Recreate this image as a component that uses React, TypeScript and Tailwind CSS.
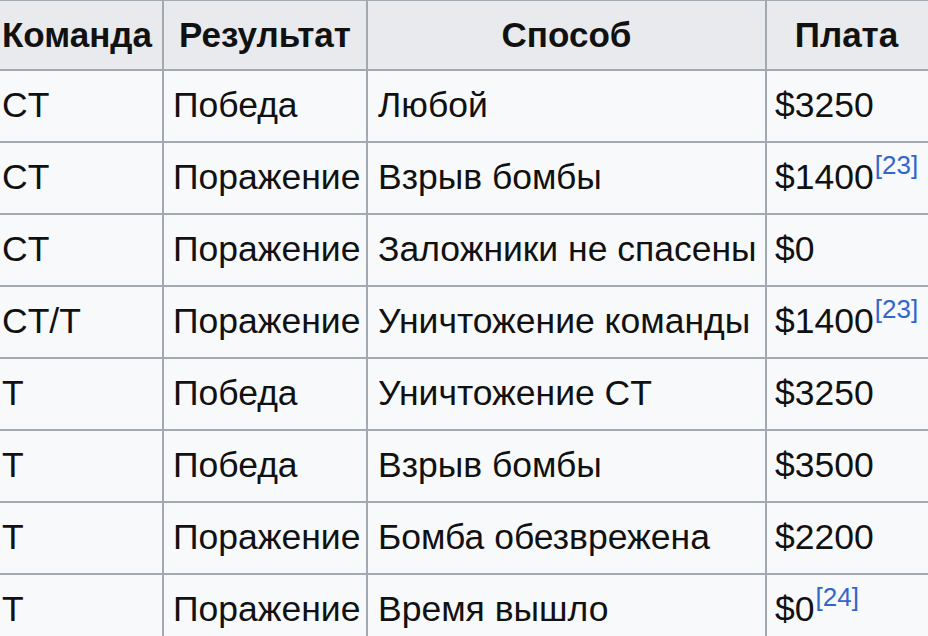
const rows: { team: string; result: string; way: string; pay: string; note?: string }[] = [
  { team: "CT", result: "Победа", way: "Любой", pay: "$3250" },
  { team: "CT", result: "Поражение", way: "Взрыв бомбы", pay: "$1400", note: "23" },
  { team: "CT", result: "Поражение", way: "Заложники не спасены", pay: "$0" },
  { team: "CT/T", result: "Поражение", way: "Уничтожение команды", pay: "$1400", note: "23" },
  { team: "T", result: "Победа", way: "Уничтожение CT", pay: "$3250" },
  { team: "T", result: "Победа", way: "Взрыв бомбы", pay: "$3500" },
  { team: "T", result: "Поражение", way: "Бомба обезврежена", pay: "$2200" },
  { team: "T", result: "Поражение", way: "Время вышло", pay: "$0", note: "24" },
]

export default function App() {
  return (
    <div className="h-[636px] w-[928px] overflow-hidden bg-[#f8f9fa] font-['Liberation_Sans',Arial,sans-serif] text-[#111111]">
      <table className="-ml-[11px] -mt-[1px] w-[945px] table-fixed border-collapse">
        <colgroup>
          <col className="w-[173px]" />
          <col className="w-[204px]" />
          <col className="w-[399px]" />
          <col className="w-[169px]" />
        </colgroup>
        <thead>
          <tr className="h-[70px] bg-[#e8eaed]">
            <th className="border-2 border-[#a2a9b1] pl-[11px] text-left text-[35px] font-bold">Команда</th>
            <th className="border-2 border-[#a2a9b1] text-center text-[35px] font-bold">Результат</th>
            <th className="border-2 border-[#a2a9b1] text-center text-[35px] font-bold">Способ</th>
            <th className="border-2 border-[#a2a9b1] pr-[8px] text-center text-[35px] font-bold">Плата</th>
          </tr>
        </thead>
        <tbody>
          {rows.map((r, i) => (
            <tr key={i} className="h-[72px] text-[35.5px]">
              <td className="border-2 border-[#a2a9b1] pl-[11px] whitespace-nowrap">{r.team}</td>
              <td className="border-2 border-[#a2a9b1] pl-[9px] whitespace-nowrap">{r.result}</td>
              <td className="border-2 border-[#a2a9b1] pl-[10px] whitespace-nowrap">{r.way}</td>
              <td className="border-2 border-[#a2a9b1] pl-[8px] whitespace-nowrap">
                {r.pay}
                {r.note && (
                  <sup className="relative -top-[15px] ml-[1px] text-[26px] text-[#3366cc]">[{r.note}]</sup>
                )}
              </td>
            </tr>
          ))}
        </tbody>
      </table>
    </div>
  )
}
